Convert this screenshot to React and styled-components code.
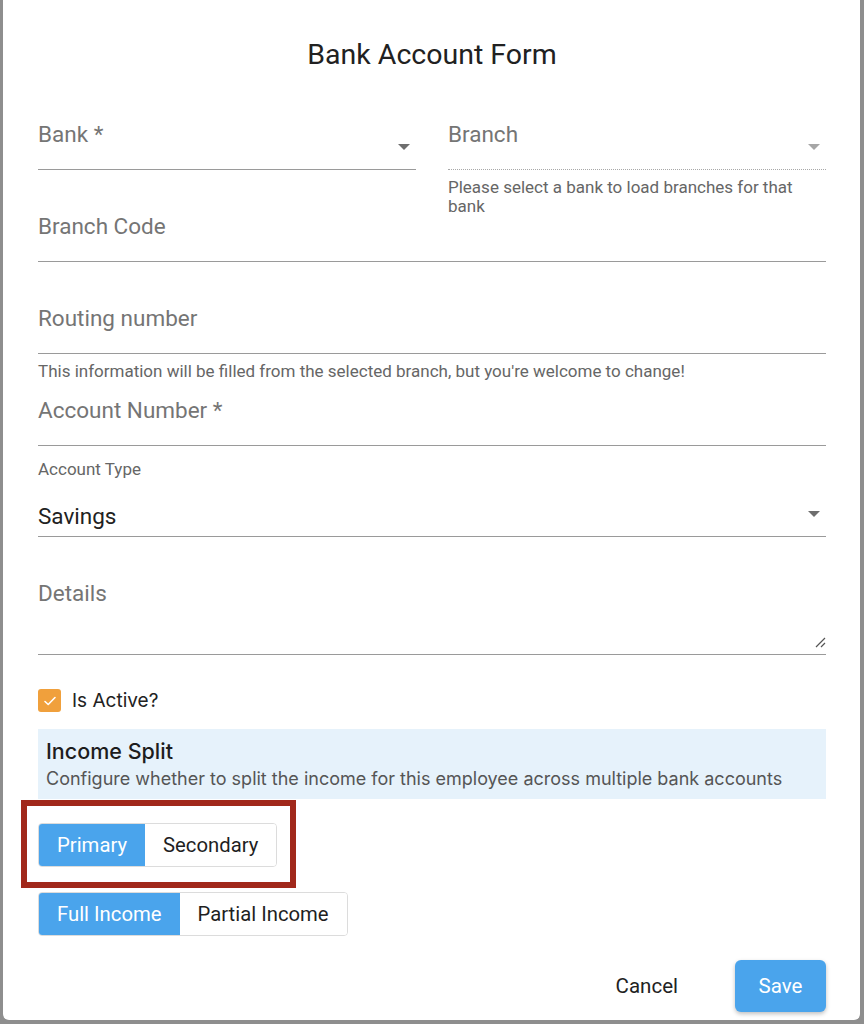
import React, { useState } from 'react'
import styled, { createGlobalStyle } from 'styled-components'

const GlobalStyle = createGlobalStyle`
  html, body {
    margin: 0;
    padding: 0;
    background: #8e8e8e;
    font-family: Roboto, "Liberation Sans", sans-serif;
  }
  * { box-sizing: border-box; }
`

const Dialog = styled.div`
  width: 857px;
  min-height: 1020px;
  margin-left: 3px;
  background: #fff;
  border-radius: 0 0 6px 6px;
  padding: 36px 34px 8px 35px;
`

const Title = styled.h2`
  margin: 0 0 40px;
  text-align: center;
  font-size: 28.5px;
  line-height: 38px;
  font-weight: 400;
  color: #212121;
`

const Row = styled.div`
  display: grid;
  grid-template-columns: 378px 378px;
  gap: 32px;
`

const Field = styled.div`
  position: relative;
  height: ${p => p.$height || 56}px;
  border-bottom: 1px ${p => (p.$dotted ? 'dotted' : 'solid')} ${p => (p.$dotted ? '#a8a8a8' : '#9a9a9a')};
`

const Label = styled.div`
  padding-top: 6px;
  font-size: 22.5px;
  line-height: 28px;
  color: #757575;
`

const Gap = styled.div`
  height: 36px;
  padding-top: 8px;
  font-size: 17px;
  line-height: 19px;
  color: #666;
`

const Arrow = styled.span`
  position: absolute;
  right: ${p => p.$right || 0}px;
  top: ${p => p.$top || 30}px;
  width: 0;
  height: 0;
  border-left: 6px solid transparent;
  border-right: 6px solid transparent;
  border-top: 6px solid ${p => (p.$disabled ? '#a6a6a6' : '#6e6e6e')};
`

const SelectBlock = styled.div`
  padding-top: 14px;
  border-bottom: 1px solid #9a9a9a;
  position: relative;
`

const SmallLabel = styled.div`
  font-size: 17px;
  line-height: 18px;
  color: #666;
`

const SelectValue = styled.div`
  margin-top: 18px;
  height: 40px;
  font-size: 22.5px;
  line-height: 40px;
  color: #212121;
`

const Resize = styled.svg`
  position: absolute;
  right: 0;
  bottom: 6px;
`

const CheckRow = styled.label`
  display: flex;
  align-items: center;
  gap: 11px;
  margin-top: 34px;
  font-family: Inter, "Liberation Sans", sans-serif;
  font-size: 19px;
  color: #222;
`

const CheckBox = styled.span`
  width: 23px;
  height: 23px;
  border-radius: 3px;
  background: ${p => (p.$checked ? '#f0a03c' : '#fff')};
  display: flex;
  align-items: center;
  justify-content: center;
`

const InfoBox = styled.div`
  margin-top: 17px;
  height: 70px;
  background: #e6f2fb;
  padding: 8px 8px 0;
  font-family: Inter, "Liberation Sans", sans-serif;
`

const InfoTitle = styled.div`
  font-size: 21.5px;
  line-height: 28px;
  font-weight: 500;
  color: #1d1d1d;
`

const InfoText = styled.div`
  margin-top: 3px;
  font-size: 18px;
  line-height: 22px;
  color: #555;
`

const Highlight = styled.div`
  margin: 1px 0 0 -17px;
  width: 275px;
  border: 6px solid #a1281b;
  padding: 17px 12px 15px 11px;
`

const ToggleGroup = styled.div`
  display: inline-flex;
  margin-top: ${p => p.$mt || 0}px;
  border: 1px solid #dcdcdc;
  border-radius: 4px;
  overflow: hidden;
`

const ToggleButton = styled.button`
  height: 42px;
  padding: 0 18px;
  border: none;
  background: ${p => (p.$active ? '#4aa4ec' : '#fff')};
  color: ${p => (p.$active ? '#fff' : '#1f1f1f')};
  font-family: Roboto, "Liberation Sans", sans-serif;
  font-size: 20.3px;
  cursor: pointer;
`

const Footer = styled.div`
  display: flex;
  justify-content: flex-end;
  align-items: center;
  gap: 49px;
  margin-top: 24px;
`

const TextButton = styled.button`
  border: none;
  background: none;
  padding: 0 8px;
  font-family: Roboto, "Liberation Sans", sans-serif;
  font-size: 20.5px;
  color: #222;
  cursor: pointer;
`

const SaveButton = styled.button`
  width: 91px;
  height: 52px;
  border: none;
  border-radius: 6px;
  background: #4aa4ec;
  color: #fff;
  font-family: Roboto, "Liberation Sans", sans-serif;
  font-size: 20.5px;
  box-shadow: 0 2px 4px rgba(0, 0, 0, 0.25);
  cursor: pointer;
`

function Check() {
  return (
    <svg width="16" height="16" viewBox="0 0 16 16">
      <path d="M3 8.5l3.2 3L13 4.5" fill="none" stroke="#fff" strokeWidth="1.6" strokeLinecap="round" strokeLinejoin="round" />
    </svg>
  )
}

export default function App() {
  const [active, setActive] = useState(true)
  const [kind, setKind] = useState('primary')
  const [income, setIncome] = useState('full')

  return (
    <>
      <GlobalStyle />
      <Dialog>
        <Title>Bank Account Form</Title>

        <Row>
          <div>
            <Field>
              <Label>Bank *</Label>
              <Arrow $right={6} />
            </Field>
            <Gap />
          </div>
          <div>
            <Field $dotted>
              <Label>Branch</Label>
              <Arrow $right={6} $disabled />
            </Field>
            <Gap>Please select a bank to load branches for that bank</Gap>
          </div>
        </Row>

        <Field>
          <Label>Branch Code</Label>
        </Field>
        <Gap />

        <Field>
          <Label>Routing number</Label>
        </Field>
        <Gap>This information will be filled from the selected branch, but you're welcome to change!</Gap>

        <Field>
          <Label>Account Number *</Label>
        </Field>

        <SelectBlock>
          <SmallLabel>Account Type</SmallLabel>
          <SelectValue>Savings</SelectValue>
          <Arrow $right={6} $top={65} />
        </SelectBlock>
        <Gap />

        <Field $height={82}>
          <Label>Details</Label>
          <Resize width="12" height="12" viewBox="0 0 12 12">
            <path d="M11 2L2 11M11 7L7 11" stroke="#555" strokeWidth="1.2" />
          </Resize>
        </Field>

        <CheckRow onClick={() => setActive(!active)}>
          <CheckBox $checked={active}>{active && <Check />}</CheckBox>
          Is Active?
        </CheckRow>

        <InfoBox>
          <InfoTitle>Income Split</InfoTitle>
          <InfoText>Configure whether to split the income for this employee across multiple bank accounts</InfoText>
        </InfoBox>

        <Highlight>
          <ToggleGroup>
            <ToggleButton $active={kind === 'primary'} onClick={() => setKind('primary')}>Primary</ToggleButton>
            <ToggleButton $active={kind === 'secondary'} onClick={() => setKind('secondary')}>Secondary</ToggleButton>
          </ToggleGroup>
        </Highlight>

        <ToggleGroup $mt={4}>
          <ToggleButton $active={income === 'full'} onClick={() => setIncome('full')}>Full Income</ToggleButton>
          <ToggleButton $active={income === 'partial'} onClick={() => setIncome('partial')}>Partial Income</ToggleButton>
        </ToggleGroup>

        <Footer>
          <TextButton>Cancel</TextButton>
          <SaveButton>Save</SaveButton>
        </Footer>
      </Dialog>
    </>
  )
}
